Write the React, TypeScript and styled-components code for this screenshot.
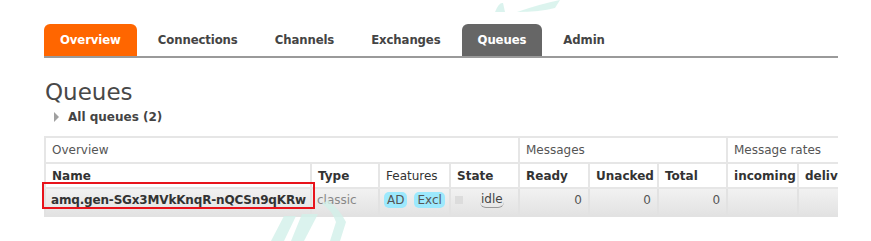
import React from "react";
import styled, { createGlobalStyle } from "styled-components";

const Global = createGlobalStyle`
  html, body { margin: 0; padding: 0; background: #fff; }
  body { font-family: "DejaVu Sans", Verdana, sans-serif; color: #484848; overflow: hidden; }
`;

const Page = styled.div`
  position: relative;
  width: 871px;
  height: 241px;
  overflow: hidden;
  padding: 24px 0 0 44px;
  box-sizing: border-box;
`;

const Tabs = styled.nav`
  display: flex;
  gap: 5px;
  width: 794px;
  height: 32px;
  border-bottom: 2px solid #9a9a9a;
  box-sizing: content-box;
`;

const Tab = styled.div<{ $active?: "orange" | "grey" }>`
  display: flex;
  align-items: center;
  padding: 0 16px;
  height: 32px;
  border-radius: 6px 6px 0 0;
  font-size: 11.7px;
  letter-spacing: -0.1px;
  font-weight: bold;
  background: ${(p) => (p.$active === "orange" ? "#ff6600" : p.$active === "grey" ? "#666666" : "transparent")};
  color: ${(p) => (p.$active ? "#ffffff" : "#444444")};
`;

const Title = styled.h1`
  margin: 20px 0 0 1px;
  font-size: 23px;
  font-weight: normal;
  line-height: 28px;
  color: #484848;
`;

const Toggle = styled.div`
  display: flex;
  align-items: center;
  gap: 9px;
  margin: 3px 0 0 10px;
  font-size: 12px;
  font-weight: bold;
  color: #444;
  line-height: 16px;
`;

const Arrow = styled.span`
  width: 0;
  height: 0;
  border-top: 5px solid transparent;
  border-bottom: 5px solid transparent;
  border-left: 5px solid #a0a0a0;
`;

const TableWrap = styled.div`
  width: 794px;
  margin: 11px 0 0 -10px;
  padding: 0 0 0 10px;
  overflow: hidden;
`;

const Table = styled.table`
  border-collapse: collapse;
  font-size: 12px;
  table-layout: fixed;
  width: 902px;
`;

const GroupCell = styled.th`
  height: 24px;
  padding: 0 6px;
  text-align: left;
  font-weight: normal;
  color: #555;
  border: 2px solid #e6e6e6;
  background: #fff;
`;

const HeadCell = styled.th<{ $light?: boolean }>`
  height: 23px;
  padding: 0 6px;
  text-align: left;
  font-weight: ${(p) => (p.$light ? "normal" : "bold")};
  color: #333;
  border: 2px solid #e6e6e6;
  white-space: nowrap;
  overflow: hidden;
`;

const DataRow = styled.tr`
  background: linear-gradient(#f2f2f2, #e2e2e2);
`;

const Cell = styled.td<{ $num?: boolean }>`
  height: 22px;
  padding: 0 6px 4px;
  text-align: ${(p) => (p.$num ? "right" : "left")};
  border: 2px solid #e2e2e2;
  border-top: none;
  color: #555;
  white-space: nowrap;
`;

const NameCell = styled(Cell)`
  padding-left: 5px;
  font-weight: bold;
  letter-spacing: -0.17px;
  color: #333;
`;

const NameText = styled.span`
  position: relative;
  display: inline-block;
  line-height: 14px;
`;

const TypeCell = styled(Cell)`
  padding-left: 5px;
  color: #888;
`;

const FeatureCell = styled(Cell)`
  padding-left: 4px;
`;

const Highlight = styled.span`
  position: absolute;
  left: -9px;
  right: -9px;
  top: -11px;
  bottom: -2px;
  border: 2px solid #e8131b;
  pointer-events: none;
`;

const Badges = styled.div`
  display: flex;
  gap: 7px;
`;

const Badge = styled.span`
  display: inline-block;
  padding: 0 3px;
  height: 16px;
  line-height: 16px;
  background: #9de9fd;
  border-radius: 5px;
  color: #555;
  font-size: 12px;
`;

const StateBox = styled.div`
  display: flex;
  align-items: center;
  gap: 17px;
`;

const StateCell = styled(Cell)`
  padding-left: 4px;
`;

const Dot = styled.span`
  width: 8px;
  height: 8px;
  background: #dcdcdc;
`;

const Idle = styled.span`
  color: #444;
  border-bottom: 1px solid #999;
  border-radius: 0 0 6px 6px;
  line-height: 15px;
  padding: 0 1px;
`;

const Next = styled.div`
  margin-top: 26px;
  margin-left: -2px;
  font-size: 16px;
  font-weight: bold;
  color: #222;
`;

const Watermark = styled.svg`
  position: absolute;
  left: 0;
  top: 0;
  pointer-events: none;
`;

export default function App() {
  const tabs = ["Overview", "Connections", "Channels", "Exchanges", "Queues", "Admin"];
  return (
    <Page>
      <Global />
      <Tabs>
        {tabs.map((t) => (
          <Tab key={t} $active={t === "Overview" ? "orange" : t === "Queues" ? "grey" : undefined}>
            {t}
          </Tab>
        ))}
      </Tabs>
      <Title>Queues</Title>
      <Toggle>
        <Arrow />
        All queues (2)
      </Toggle>
      <TableWrap>
        <Table>
          <colgroup>
            <col style={{ width: 266 }} />
            <col style={{ width: 68 }} />
            <col style={{ width: 71 }} />
            <col style={{ width: 69 }} />
            <col style={{ width: 70 }} />
            <col style={{ width: 69 }} />
            <col style={{ width: 69 }} />
            <col style={{ width: 71 }} />
            <col style={{ width: 149 }} />
          </colgroup>
          <thead>
            <tr>
              <GroupCell colSpan={4}>Overview</GroupCell>
              <GroupCell colSpan={3}>Messages</GroupCell>
              <GroupCell colSpan={2}>Message rates</GroupCell>
            </tr>
            <tr>
              <HeadCell>Name</HeadCell>
              <HeadCell>Type</HeadCell>
              <HeadCell $light>Features</HeadCell>
              <HeadCell>State</HeadCell>
              <HeadCell>Ready</HeadCell>
              <HeadCell>Unacked</HeadCell>
              <HeadCell>Total</HeadCell>
              <HeadCell>incoming</HeadCell>
              <HeadCell>deliver / get</HeadCell>
            </tr>
          </thead>
          <tbody>
            <DataRow>
              <NameCell>
                <NameText>
                  amq.gen-SGx3MVkKnqR-nQCSn9qKRw
                  <Highlight />
                </NameText>
              </NameCell>
              <TypeCell>classic</TypeCell>
              <FeatureCell>
                <Badges>
                  <Badge>AD</Badge>
                  <Badge>Excl</Badge>
                </Badges>
              </FeatureCell>
              <StateCell>
                <StateBox>
                  <Dot />
                  <Idle>idle</Idle>
                </StateBox>
              </StateCell>
              <Cell $num>0</Cell>
              <Cell $num>0</Cell>
              <Cell $num>0</Cell>
              <Cell />
              <Cell />
            </DataRow>
          </tbody>
        </Table>
      </TableWrap>
      <Next>Headers</Next>
      <Watermark width="871" height="241" viewBox="0 0 871 241">
        <g fill="#d3f1ea" opacity="0.8">
          <path d="M495 12 Q499 2 503 3 L505 12 Z" />
          <path d="M517 12 Q540 4 560 0 L555 8 Q540 12 517 12 Z" />
          <path d="M284 216 L296 216 L284 241 L271 241 Z" />
          <path d="M302 214 L318 214 L304 241 L291 241 Z" />
          <path d="M328 200 Q340 210 346 222 L340 241 L330 241 L336 222 Q332 210 322 204 Z" />
        </g>
      </Watermark>
    </Page>
  );
}
